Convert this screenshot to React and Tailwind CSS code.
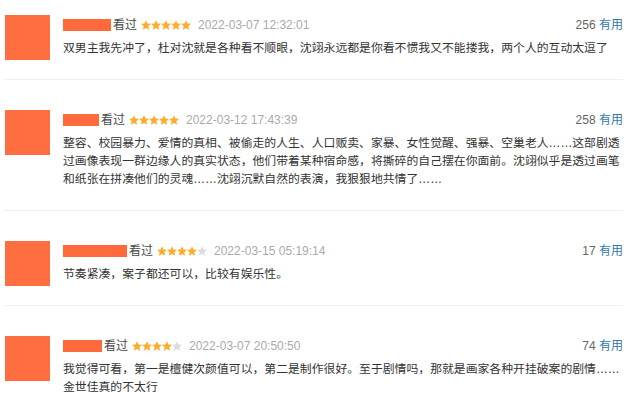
import clsx from "clsx";

// Star icon
const Star = ({ filled }) => {
  return (
    <svg viewBox="1.5 1.5 21 20.2" className="w-[10px] h-[10px]">
      <path
        fill={filled ? "#ffac2d" : "#dddddd"}
        d="M12 1.5l3.1 6.9 7.4.8-5.6 5 1.7 7.3L12 17.7l-6.6 3.8 1.7-7.3-5.6-5 7.4-.8z"
      />
    </svg>
  );
};

// Review item
const Review = ({ first, nameWidth, stars, date, votes, lines }) => {
  return (
    <div
      className={clsx(
        "flex items-start pb-[19px] border-b border-[#eeeeee]",
        first ? "pt-[15px]" : "pt-[30px]"
      )}
    >
      <div className="w-[45px] h-[45px] shrink-0 bg-[#ff6e40]" />
      <div className="ml-[13px] flex-1 pb-[3px]">
        <div className="flex items-center h-[20px] text-[12px]">
          <span className={clsx("h-[12px] bg-[#ff6a3d]", nameWidth)} />
          <span className="ml-[2px] text-[#494949]">看过</span>
          <span className="ml-[4px] flex">
            {[0, 1, 2, 3, 4].map((n) => (
              <Star key={n} filled={n < stars} />
            ))}
          </span>
          <span className="ml-[7px] text-[#aaaaaa]">{date}</span>
          <span className="ml-auto text-[#666666]">
            {votes} <span className="text-[#3377aa]">有用</span>
          </span>
        </div>
        <div className="mt-1 text-[11.85px] leading-[18px] text-[#333333]">
          {lines.map((line, i) => (
            <div key={i} className="whitespace-nowrap">
              {line}
            </div>
          ))}
        </div>
      </div>
    </div>
  );
};

const App = () => {
  const reviews = [
    {
      id: 1,
      nameWidth: "w-[48px]",
      stars: 5,
      date: "2022-03-07 12:32:01",
      votes: 256,
      lines: [
        "双男主我先冲了，杜对沈就是各种看不顺眼，沈翊永远都是你看不惯我又不能搂我，两个人的互动太逗了",
      ],
    },
    {
      id: 2,
      nameWidth: "w-[36px]",
      stars: 5,
      date: "2022-03-12 17:43:39",
      votes: 258,
      lines: [
        "整容、校园暴力、爱情的真相、被偷走的人生、人口贩卖、家暴、女性觉醒、强暴、空巢老人……这部剧透",
        "过画像表现一群边缘人的真实状态，他们带着某种宿命感，将撕碎的自己摆在你面前。沈翊似乎是透过画笔",
        "和纸张在拼凑他们的灵魂……沈翊沉默自然的表演，我狠狠地共情了……",
      ],
    },
    {
      id: 3,
      nameWidth: "w-[64px]",
      stars: 4,
      date: "2022-03-15 05:19:14",
      votes: 17,
      lines: ["节奏紧凑，案子都还可以，比较有娱乐性。"],
    },
    {
      id: 4,
      nameWidth: "w-[39px]",
      stars: 4,
      date: "2022-03-07 20:50:50",
      votes: 74,
      lines: [
        "我觉得可看，第一是檀健次颜值可以，第二是制作很好。至于剧情吗，那就是画家各种开挂破案的剧情……",
        "金世佳真的不太行",
      ],
    },
  ];

  return (
    <div className="w-[640px] h-[410px] overflow-hidden bg-white font-['Liberation_Sans','Noto_Sans_CJK_SC',sans-serif]">
      <div className="ml-[5px] w-[618px]">
        {reviews.map((r, i) => (
          <Review
            key={r.id}
            first={i === 0}
            nameWidth={r.nameWidth}
            stars={r.stars}
            date={r.date}
            votes={r.votes}
            lines={r.lines}
          />
        ))}
      </div>
    </div>
  );
};

export default App;
